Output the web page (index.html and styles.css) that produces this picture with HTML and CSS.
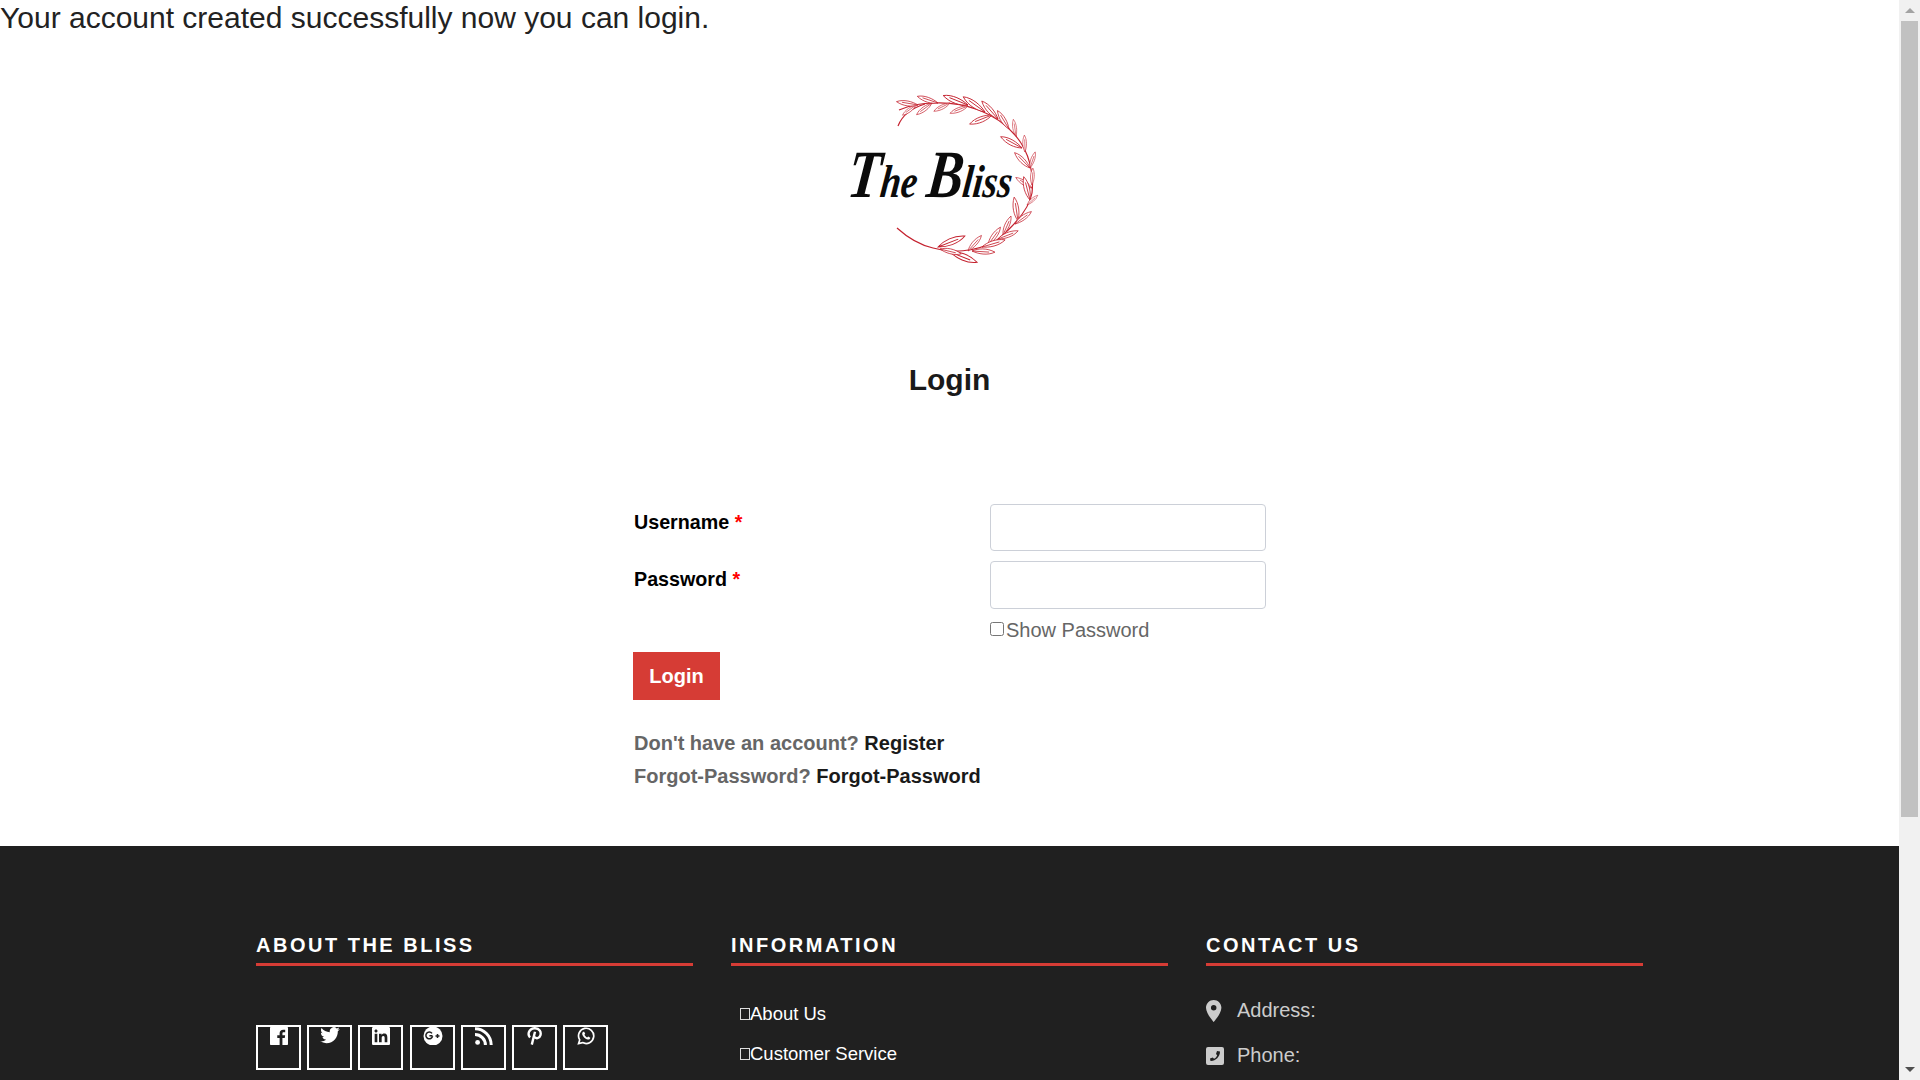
FILE: index.html
```html
<!DOCTYPE html>
<html>
<head>
  <title>Login</title>
  <link rel="stylesheet" href="styles.css">
</head>

<body>
  <div class="page">
    <p class="notice">Your account created successfully now you can login.</p>

    <div class="logo">
      <svg width="220" height="190" viewBox="840 85 220 190">
        <defs>
          <path id="leaf" d="M0 0C6 -4 15 -6 24 -3C17 2 7 2 0 0ZM0 0L18 -2"/>
        </defs>
        <path class="stem" d="M899 110C912 104 925 103 935 103C965 102 995 112 1015 135C1030 152 1034 175 1032 193C1029 210 1015 225 997 240C975 253 950 253 933 248C920 245 908 238 897 228"/>
        <path class="stem" d="M925 104C915 107 903 113 898 126"/>
        <g class="leaves">
          <use href="#leaf" transform="translate(916 105) rotate(150) scale(.7)"/>
          <use href="#leaf" transform="translate(918 105) rotate(196) scale(.9)"/>
          <use href="#leaf" transform="translate(932 103) rotate(150) scale(.8)"/>
          <use href="#leaf" transform="translate(938 103) rotate(205) scale(.9)"/>
          <use href="#leaf" transform="translate(950 103) rotate(160) scale(.75)"/>
          <use href="#leaf" transform="translate(968 105) rotate(208) scale(1.1)"/>
          <use href="#leaf" transform="translate(968 106) rotate(165) scale(.8)"/>
          <use href="#leaf" transform="translate(985 112) rotate(222) scale(1.1)"/>
          <use href="#leaf" transform="translate(992 115) rotate(165) scale(1)"/>
          <use href="#leaf" transform="translate(998 119) rotate(235) scale(1)"/>
          <use href="#leaf" transform="translate(1009 129) rotate(245) scale(.9)"/>
          <use href="#leaf" transform="translate(1022 148) rotate(215) scale(1)"/>
          <use href="#leaf" transform="translate(1016 136) rotate(268) scale(.7)"/>
          <use href="#leaf" transform="translate(1025 152) rotate(275) scale(.7)"/>
          <use href="#leaf" transform="translate(1030 168) rotate(232) scale(.9)"/>
          <use href="#leaf" transform="translate(1030 168) rotate(295) scale(.7)"/>
          <use href="#leaf" transform="translate(1032 188) rotate(220) scale(.8)"/>
          <use href="#leaf" transform="translate(1032 185) rotate(280) scale(.7)"/>
          <use href="#leaf" transform="translate(1030 200) rotate(262) scale(1)"/>
          <use href="#leaf" transform="translate(1027 205) rotate(325) scale(.6)"/>
          <use href="#leaf" transform="translate(1018 221) rotate(268) scale(1)"/>
          <use href="#leaf" transform="translate(1015 224) rotate(330) scale(.85)"/>
          <use href="#leaf" transform="translate(1003 235) rotate(300) scale(.85)"/>
          <use href="#leaf" transform="translate(998 239) rotate(345) scale(.9)"/>
          <use href="#leaf" transform="translate(988 245) rotate(312) scale(.9)"/>
          <use href="#leaf" transform="translate(982 247) rotate(350) scale(1)"/>
          <use href="#leaf" transform="translate(968 251) rotate(318) scale(.85)"/>
          <use href="#leaf" transform="translate(972 251) rotate(10) scale(.95)"/>
          <use href="#leaf" transform="translate(938 247) rotate(345) scale(1.2)"/>
          <use href="#leaf" transform="translate(950 252) rotate(28) scale(1.2)"/>
          <use href="#leaf" transform="translate(940 249) rotate(20) scale(.9)"/>
        </g>
        <text class="logo-text" transform="translate(846 197) scale(1 1.25) skewX(-8)"><tspan class="logo-cap">T</tspan>he <tspan class="logo-cap">B</tspan>liss</text>
      </svg>
    </div>

    <h1 class="title">Login</h1>

    <form class="login-form" onsubmit="return false">
      <div class="field">
        <label for="username">Username <span class="req">*</span></label>
        <input type="text" id="username">
      </div>
      <div class="field">
        <label for="password">Password <span class="req">*</span></label>
        <div>
          <input type="password" id="password" class="tall">
          <div class="show-pass"><input type="checkbox" id="show"><label for="show">Show Password</label></div>
        </div>
      </div>
      <button type="submit" class="btn">Login</button>
      <p class="links">Don't have an account? <a href="#">Register</a></p>
      <p class="links">Forgot-Password? <a href="#">Forgot-Password</a></p>
    </form>

    <footer class="footer">
      <div class="footer-cols">
        <div>
          <h4>ABOUT THE BLISS</h4>
          <div class="social">
            <a href="#"><svg width="18" height="18" viewBox="0 0 24 24"><path d="M22.675 0H1.325C.593 0 0 .593 0 1.325v21.351C0 23.407.593 24 1.325 24H12.82v-9.294H9.692v-3.622h3.128V8.413c0-3.1 1.893-4.788 4.659-4.788 1.325 0 2.463.099 2.795.143v3.24l-1.918.001c-1.504 0-1.795.715-1.795 1.763v2.313h3.587l-.467 3.622h-3.12V24h6.116c.73 0 1.323-.593 1.323-1.325V1.325C24 .593 23.407 0 22.675 0z"/></svg></a>
            <a href="#"><svg width="20" height="18" viewBox="0 0 24 22" ><path d="M23.953 2.57a10 10 0 01-2.825.775 4.958 4.958 0 002.163-2.723c-.951.555-2.005.959-3.127 1.184a4.92 4.92 0 00-8.384 4.482C7.69 6.095 4.067 4.13 1.64 1.162a4.822 4.822 0 00-.666 2.475c0 1.71.87 3.213 2.188 4.096a4.904 4.904 0 01-2.228-.616v.06a4.923 4.923 0 003.946 4.827 4.996 4.996 0 01-2.212.085 4.936 4.936 0 004.604 3.417 9.867 9.867 0 01-6.102 2.105c-.39 0-.779-.023-1.17-.067a13.995 13.995 0 007.557 2.209c9.053 0 13.998-7.496 13.998-13.985 0-.21 0-.42-.015-.63A9.935 9.935 0 0024 2.59z"/></svg></a>
            <a href="#"><svg width="18" height="18" viewBox="0 0 24 24"><path d="M20.447 20.452h-3.554v-5.569c0-1.328-.027-3.037-1.852-3.037-1.853 0-2.136 1.445-2.136 2.939v5.667H9.351V9h3.414v1.561h.046c.477-.9 1.637-1.85 3.37-1.85 3.601 0 4.267 2.37 4.267 5.455v6.286zM5.337 7.433c-1.144 0-2.063-.926-2.063-2.065 0-1.138.92-2.063 2.063-2.063 1.14 0 2.064.925 2.064 2.063 0 1.139-.925 2.065-2.064 2.065zm1.782 13.019H3.555V9h3.564v11.452zM22.225 0H1.771C.792 0 0 .774 0 1.729v20.542C0 23.227.792 24 1.771 24h20.451C23.2 24 24 23.227 24 22.271V1.729C24 .774 23.2 0 22.222 0h.003z"/></svg></a>
            <a href="#"><svg width="20" height="18" viewBox="0 0 20 18"><circle cx="10" cy="9" r="9.500"/><path class="cut" d="M9.500 8.800H6.400M9 6.400A3.400 3.400 0 1 0 9.600 9.200M12.500 9h4M14.500 7v4"/></svg></a>
            <a href="#"><svg width="18" height="18" viewBox="0 0 18 18"><circle cx="2.600" cy="15.400" r="2.400"/><path class="line" d="M0 7.600A10.400 10.400 0 0 1 10.400 18M0 1.800A16.200 16.200 0 0 1 16.200 18"/></svg></a>
            <a href="#"><svg width="15" height="18" viewBox="0 0 15 18"><path class="line thin" d="M3 10.500C.6 8 1 2 7.500 1.300C12.600 1 14.400 5 13.400 8.300C12.400 11.600 8.800 12 7.600 9.800M8 4.800L4.800 17.600"/></svg></a>
            <a href="#"><svg width="18" height="18" viewBox="0 0 18 18"><path class="line thinner" d="M1.600 16.600L2.700 12.900A7.600 7.600 0 1 1 5.600 15.600Z"/><path d="M6.200 4.800C5 5.600 4.800 7.200 6 9C7.300 11 9.300 12.400 11 12.600C12.400 12.700 13.300 11.700 13.300 10.700L11.200 9.500L10.100 10.500C9 10 8 9 7.400 7.800L8.200 6.800L7.200 4.800Z"/></svg></a>
          </div>
        </div>
        <div>
          <h4>INFORMATION</h4>
          <ul class="info-list">
            <li><a href="#">About Us</a></li>
            <li><a href="#">Customer Service</a></li>
          </ul>
        </div>
        <div>
          <h4>CONTACT US</h4>
          <div class="contact">
            <div class="contact-row">
              <svg width="18" height="22" viewBox="5 2 14 20" preserveAspectRatio="xMinYMid"><path d="M12 2C8.130 2 5 5.130 5 9c0 5.250 7 13 7 13s7-7.750 7-13c0-3.870-3.130-7-7-7zm0 9.500a2.500 2.500 0 010-5 2.500 2.500 0 010 5z"/></svg>
              <span>Address:</span>
            </div>
            <div class="contact-row">
              <svg width="18" height="18" viewBox="0 0 18 18"><path fill-rule="evenodd" d="M2 0H16A2 2 0 0 1 18 2V16A2 2 0 0 1 16 18H2A2 2 0 0 1 0 16V2A2 2 0 0 1 2 0ZM11 4L10 7L11.200 8.200C10.500 10 9.500 11 8 11.700L6.800 10.500L4 11.500L4.500 14C9 14.500 14 10 14 4.600Z"/></svg>
              <span>Phone:</span>
            </div>
          </div>
        </div>
      </div>
    </footer>
  </div>

  <div class="scrollbar">
    <div class="arrow-box"><span class="arrow-up"></span></div>
    <div class="thumb"></div>
    <div class="track"></div>
    <div class="arrow-box"><span class="arrow-down"></span></div>
  </div>
</body>

</html>
```

FILE: styles.css
```css
:root {
  --red: #d63c35;
  --dark: #202020;
  --muted: #666;
  --text: #1a1a1a;
}

html, body {
  height: 100%;
}

body {
  margin: 0;
  display: flex;
  height: 1080px;
  overflow: hidden;
  background: #fff;
  color: var(--text);
  font-family: "Liberation Sans", Arial, sans-serif;
}

.page {
  flex: 1;
  min-width: 0;
  height: 1080px;
  overflow: hidden;
}

.notice {
  margin: 0;
  font-size: 30px;
  line-height: 36px;
  color: #222;
}

.logo {
  display: flex;
  justify-content: center;
  margin-top: 49px;
  height: 190px;
}

.stem {
  fill: none;
  stroke: #c4212e;
  stroke-width: 1.2;
}

.leaves {
  fill: #fff;
  stroke: #c4212e;
  stroke-width: 0.8;
}

.logo-text {
  font-family: "Liberation Serif", serif;
  font-style: italic;
  font-weight: bold;
  font-size: 37px;
  fill: #0b0b0b;
}

.logo-cap {
  font-size: 54px;
}

.title {
  margin: 88px 0 0;
  font-size: 30px;
  line-height: 34px;
  font-weight: bold;
  text-align: center;
}

.login-form {
  width: 633px;
  margin: 107px auto 0;
}

.field {
  display: grid;
  grid-template-columns: 357px 276px;
  margin-bottom: 10px;
}

.field > label {
  padding: 7px 0 0 1px;
  font-size: 19.7px;
  line-height: 22px;
  font-weight: bold;
  color: #000;
}

.req {
  color: #f00;
}

.field input[type="text"],
.field input[type="password"] {
  display: block;
  box-sizing: border-box;
  width: 276px;
  height: 47px;
  padding: 6px 12px;
  border: 1px solid #ccd0d8;
  border-radius: 4px;
  background: #fff;
}

.field input.tall[type="password"] {
  height: 48px;
}

.show-pass {
  display: flex;
  align-items: center;
  height: 23px;
  margin-top: 10px;
  font-size: 20px;
  color: var(--muted);
}

.show-pass input {
  width: 14px;
  height: 14px;
  margin: 0 2px 4px 0;
}

.btn {
  display: block;
  width: 87px;
  height: 48px;
  margin-top: 10px;
  padding: 0;
  border: none;
  background: var(--red);
  color: #fff;
  font-family: inherit;
  font-size: 20px;
  font-weight: bold;
}

.links {
  margin: 0;
  padding-left: 1px;
  font-size: 20px;
  line-height: 33px;
  font-weight: bold;
  color: var(--muted);
}

.btn + .links {
  margin-top: 27px;
}

.links a {
  color: var(--text);
  text-decoration: none;
}

.footer {
  box-sizing: border-box;
  height: 300px;
  margin-top: 53px;
  padding-top: 88px;
  background: var(--dark);
  color: #fff;
}

.footer-cols {
  display: grid;
  grid-template-columns: repeat(3, 437px);
  gap: 38px;
  justify-content: center;
}

.footer h4 {
  margin: 0;
  padding-bottom: 6px;
  border-bottom: 3px solid var(--red);
  font-size: 20px;
  line-height: 23px;
  font-weight: bold;
  letter-spacing: 2.5px;
}

.social {
  display: flex;
  gap: 6px;
  margin-top: 59px;
}

.social a {
  box-sizing: border-box;
  display: flex;
  justify-content: center;
  width: 45px;
  height: 45px;
  border: 2px solid #fff;
}

.social svg {
  fill: #fff;
}

.social a:nth-child(3) {
  margin-right: 1px;
}

.cut {
  fill: none;
  stroke: var(--dark);
  stroke-width: 1.5;
}

.line {
  fill: none;
  stroke: #fff;
  stroke-width: 3;
}

.line.thin {
  stroke-width: 2.4;
}

.line.thinner {
  stroke-width: 1.7;
}

.info-list {
  margin: 37px 0 0;
  padding: 0 0 0 9px;
  list-style: none;
}

.info-list li {
  margin-bottom: 18px;
  font-size: 18.5px;
  line-height: 22px;
}

.info-list li::before {
  content: "";
  box-sizing: border-box;
  display: inline-block;
  width: 10px;
  height: 12px;
  border: 1px solid #ddd;
}

.info-list a {
  color: #fff;
  text-decoration: none;
}

.contact {
  margin-top: 33px;
}

.contact-row {
  display: flex;
  align-items: center;
  gap: 13px;
  height: 23px;
  margin-bottom: 22px;
  font-size: 20px;
  color: #ccc;
}

.contact-row svg {
  fill: #ccc;
}

.scrollbar {
  flex: none;
  display: flex;
  flex-direction: column;
  width: 21px;
  height: 1080px;
  background: #f1f1f1;
}

.arrow-box {
  flex: none;
  display: flex;
  align-items: center;
  justify-content: center;
  height: 21px;
}

.arrow-up {
  border: 5px solid transparent;
  border-top: none;
  border-bottom: 5px solid #a3a3a3;
}

.arrow-down {
  border: 5px solid transparent;
  border-bottom: none;
  border-top: 5px solid #505050;
}

.thumb {
  flex: none;
  height: 796px;
  margin: 0 2px;
  background: #c1c1c1;
}

.track {
  flex: 1;
}
```
